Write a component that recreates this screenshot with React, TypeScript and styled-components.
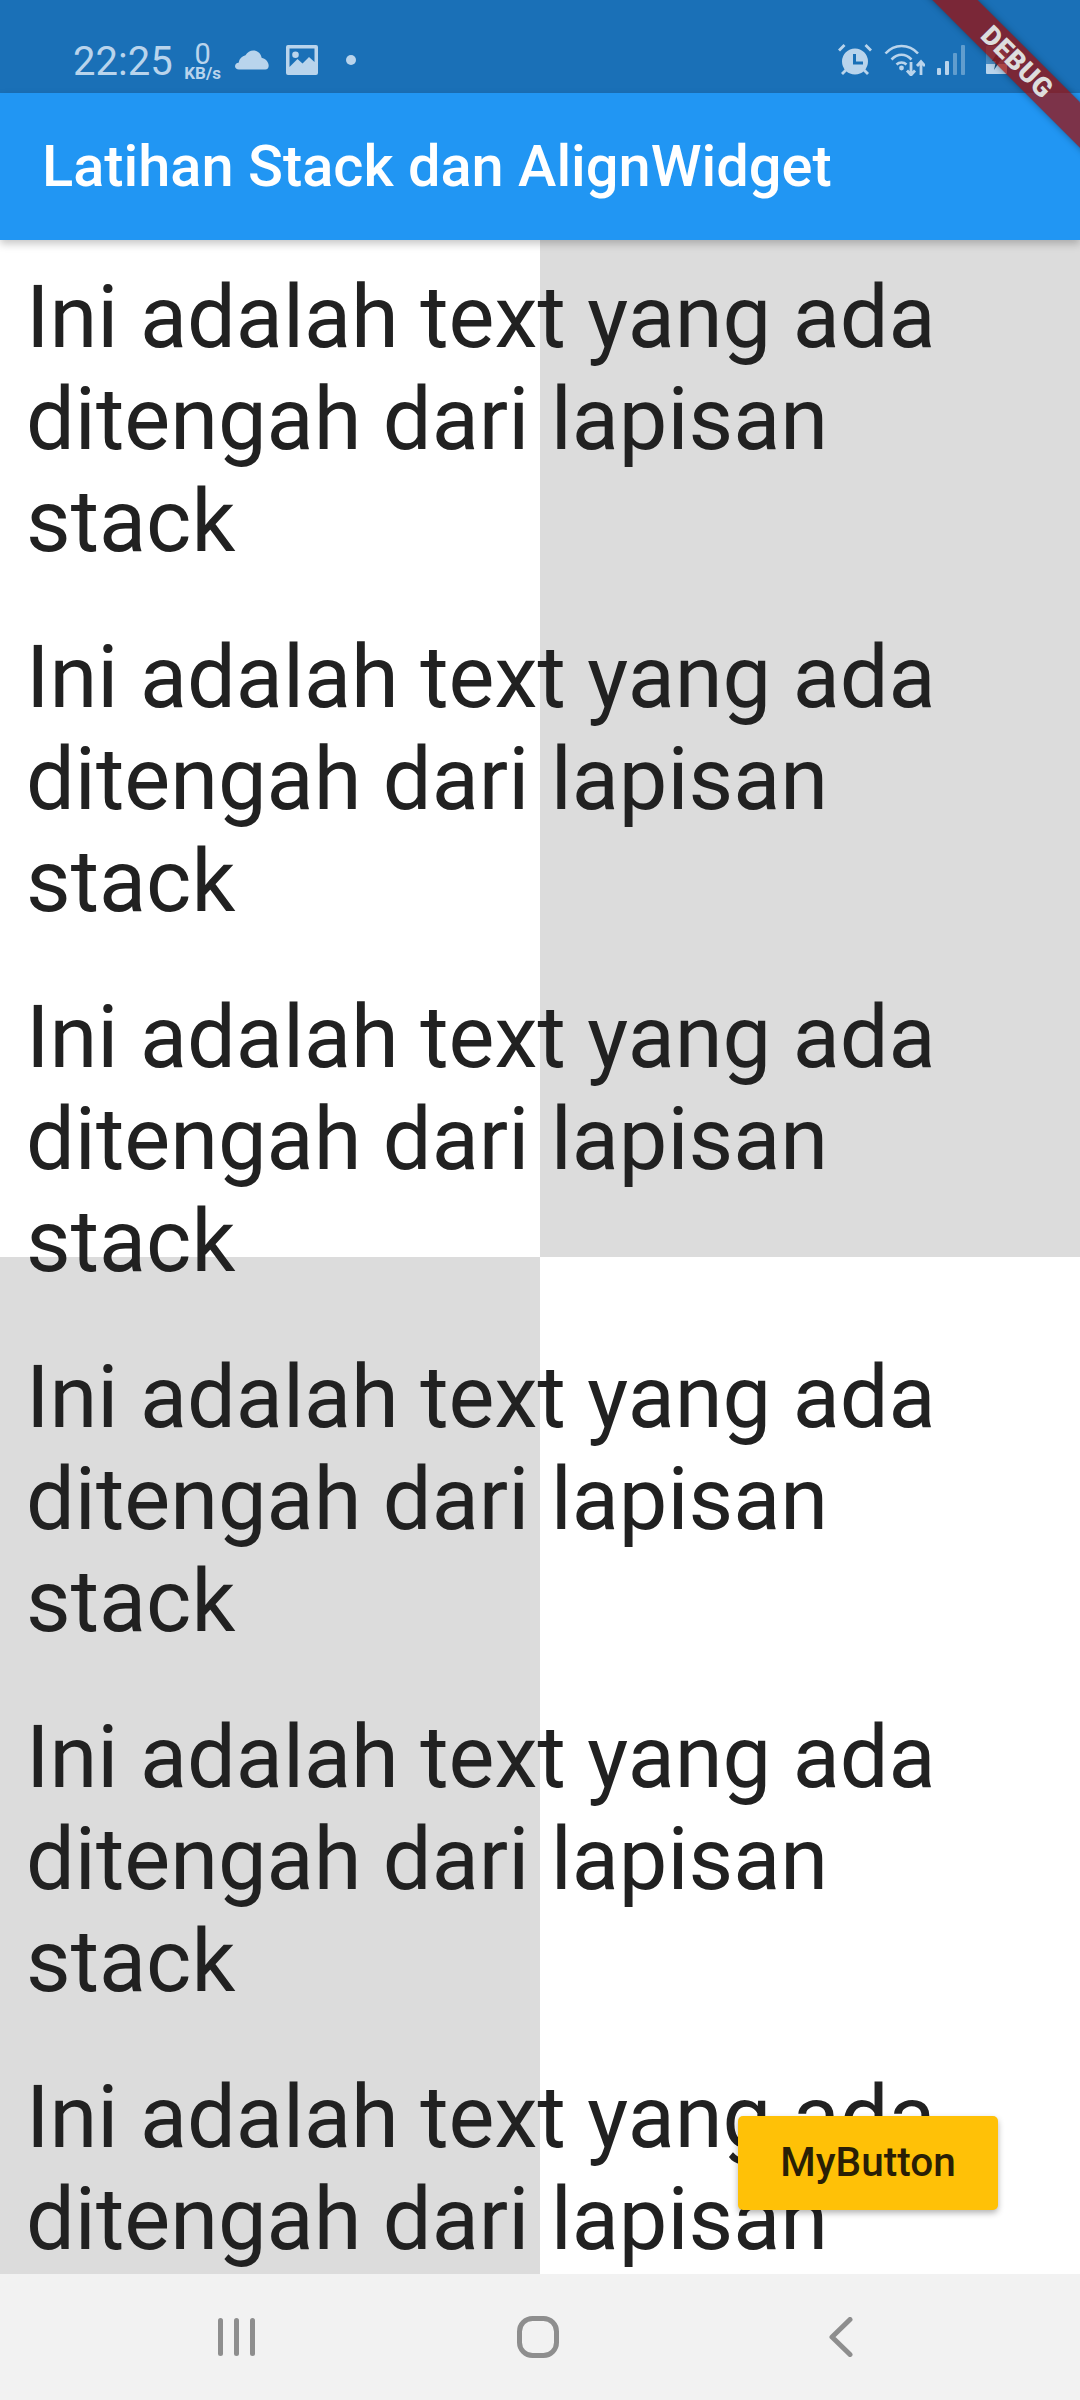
import * as React from "react";
import styled, { createGlobalStyle } from "styled-components";

const GlobalStyle = createGlobalStyle`
  html, body {
    margin: 0;
    padding: 0;
    background: #fff;
  }
  * {
    box-sizing: border-box;
  }
`;

const Screen = styled.div`
  position: relative;
  display: flex;
  flex-direction: column;
  width: 1080px;
  height: 2400px;
  overflow: hidden;
  font-family: Roboto, "Liberation Sans", sans-serif;
`;

const StatusBar = styled.div`
  display: flex;
  align-items: center;
  flex: 0 0 93px;
  padding: 27px 73px 0 73px;
  background: #1a70b7;
  color: #b9d4ec;
`;

const Clock = styled.span`
  font-size: 40px;
  line-height: 1;
  margin-top: 3px;
`;

const Speed = styled.div`
  display: flex;
  flex-direction: column;
  align-items: center;
  width: 38px;
  margin-left: 11px;
  margin-top: 3px;
`;

const SpeedValue = styled.span`
  font-size: 29px;
  line-height: 24px;
`;

const SpeedUnit = styled.span`
  font-size: 17px;
  line-height: 15px;
  font-weight: 700;
`;

const Spacer = styled.div`
  flex: 1;
`;

const StatusIcon = styled.svg<{ $left: number }>`
  display: block;
  flex: none;
  margin-left: ${p => p.$left}px;
`;

const AppBar = styled.header`
  position: relative;
  z-index: 1;
  display: flex;
  align-items: center;
  flex: 0 0 147px;
  padding-left: 42px;
  background: #2196f3;
  box-shadow: 0 4px 8px rgba(0, 0, 0, 0.22);
`;

const Title = styled.h1`
  margin: 0 0 2px;
  color: #fff;
  font-size: 57.75px;
  font-weight: 500;
`;

const Content = styled.main`
  position: relative;
  flex: 1;
  overflow: hidden;
`;

const Backdrop = styled.div`
  display: grid;
  grid-template-columns: 1fr 1fr;
  grid-template-rows: 1017px 1017px;
  height: 100%;
`;

const Tile = styled.div<{ $shaded?: boolean }>`
  background: ${p => (p.$shaded ? "#dcdcdc" : "#fff")};
`;

const TextLayer = styled.div`
  position: absolute;
  top: 0;
  left: 0;
  right: 0;
  display: flex;
  flex-direction: column;
  gap: 54px;
  padding: 27px 26px 0 26px;
`;

const Paragraph = styled.p`
  margin: 0;
  color: #212121;
  font-size: 86.6px;
  line-height: 102px;
`;

const MyButton = styled.button`
  position: absolute;
  left: 738px;
  top: 1876px;
  width: 260px;
  height: 94px;
  padding: 0 0 2px;
  border: 0;
  border-radius: 5px;
  background: #ffc107;
  color: #2a1f05;
  font-family: inherit;
  font-size: 40.5px;
  font-weight: 500;
  box-shadow: 0 3px 6px rgba(0, 0, 0, 0.3);
`;

const NavBar = styled.nav`
  display: flex;
  align-items: center;
  flex: 0 0 126px;
  padding-left: 218px;
  background: #f2f2f2;
`;

const NavIcon = styled.svg<{ $left: number }>`
  display: block;
  flex: none;
  margin-left: ${p => p.$left}px;
`;

const BannerClip = styled.div`
  position: absolute;
  top: 0;
  right: 0;
  z-index: 2;
  width: 200px;
  height: 200px;
  overflow: hidden;
  pointer-events: none;
`;

const Banner = styled.div`
  position: absolute;
  left: -3px;
  top: 46px;
  display: flex;
  align-items: center;
  justify-content: center;
  width: 280px;
  height: 32px;
  transform: rotate(45deg);
  background: rgba(164, 9, 0, 0.7);
  box-shadow: 0 0 7px rgba(0, 0, 0, 0.35);
  color: #ddd;
  font-size: 27px;
  font-weight: 900;
  letter-spacing: 0.5px;
`;

const paragraphs = [0, 1, 2, 3, 4, 5];

export default function App() {
  return (
    <Screen>
      <GlobalStyle />
      <StatusBar>
        <Clock>22:25</Clock>
        <Speed>
          <SpeedValue>0</SpeedValue>
          <SpeedUnit>KB/s</SpeedUnit>
        </Speed>
        <StatusIcon $left={13} width="34" height="20" viewBox="0 0 34 20" fill="currentColor">
          <path d="M4 19.500C1.600 19.500 0 18 0 16.200c0-1.900 1.500-3.300 3.600-3.500C4.400 8.600 7 6 10.500 5.300 12.300 2 15.300 0.500 18.200 0.500c4.400 0 7.800 3 8.400 7.200 3.700 0.800 7.100 4 7.100 8.100 0 2.200-1.300 3.700-3.400 3.700z" />
        </StatusIcon>
        <StatusIcon $left={17} width="32" height="30" viewBox="0 0 32 30" fill="currentColor">
          <path fillRule="evenodd" d="M2 0h28a2 2 0 0 1 2 2v26a2 2 0 0 1-2 2H2a2 2 0 0 1-2-2V2a2 2 0 0 1 2-2zM3.500 3.500v18.500l8-8 5 4.500 6.500-6.500 5.500 5V3.500zM9.500 6.500a3.300 3.300 0 1 1 0 6.600 3.300 3.300 0 0 1 0-6.600z" />
        </StatusIcon>
        <StatusIcon $left={28} width="10" height="10" viewBox="0 0 10 10" fill="currentColor">
          <circle cx="5" cy="5" r="5" />
        </StatusIcon>
        <Spacer />
        <StatusIcon width="34" height="32" viewBox="0 0 34 32" $left={0} fill="currentColor">
          <path fillRule="evenodd" d="M17 4.500a13 13 0 1 1 0 26 13 13 0 0 1 0-26zM15 10v10.500h10v-3h-7V10z" />
          <path d="M0 5.500 5.500 0l2 2-5.500 5.500zM34 5.500 28.500 0l-2 2 5.500 5.500zM3 29l4-4 2 2-4 4zM31 29l-4-4-2 2 4 4z" />
        </StatusIcon>
        <StatusIcon $left={12} width="41" height="32" viewBox="0 0 41 32" fill="none" stroke="currentColor" strokeWidth="2.600">
          <path d="M1.500 9.500C6 4.500 11.500 2 17.500 2S29.500 4.500 34 9.500" />
          <path d="M7.500 15.500c3-3 6.300-4.700 10-4.700 3.700 0 7 1.700 10 4.700" />
          <path d="M12.500 20.500c1.500-1.400 3.200-2 5-2s3.500.6 5 2" />
          <circle cx="17.500" cy="24" r="2.400" fill="currentColor" stroke="none" />
          <path d="M27 18v13M23 26.500l4 4.500 4-4.500M37 31V18M33 22l4-4.500 4 4.500" strokeWidth="2.800" />
        </StatusIcon>
        <StatusIcon $left={12} width="28" height="30" viewBox="0 0 28 30" fill="currentColor">
          <rect x="0" y="23" width="4" height="7" rx="1" />
          <rect x="8" y="16" width="4" height="14" rx="1" />
          <rect x="16" y="8" width="4" height="22" rx="1" opacity="0.45" />
          <rect x="24" y="0" width="4" height="30" rx="1" opacity="0.45" />
        </StatusIcon>
        <StatusIcon $left={21} width="21" height="28" viewBox="0 0 21 28" fill="currentColor">
          <path d="M1 0h19a1 1 0 0 1 1 1v17H0V1a1 1 0 0 1 1-1z" opacity="0.3" />
          <path d="M0 18h21v9a1 1 0 0 1-1 1H1a1 1 0 0 1-1-1z" />
          <path d="M13 4 6 15h4l-2 9 8-12h-4z" fill="#17527f" />
        </StatusIcon>
      </StatusBar>
      <AppBar>
        <Title>Latihan Stack dan AlignWidget</Title>
      </AppBar>
      <Content>
        <Backdrop>
          <Tile />
          <Tile $shaded />
          <Tile $shaded />
          <Tile />
        </Backdrop>
        <TextLayer>
          {paragraphs.map(i => (
            <Paragraph key={i}>Ini adalah text yang ada ditengah dari lapisan stack</Paragraph>
          ))}
        </TextLayer>
        <MyButton>MyButton</MyButton>
      </Content>
      <NavBar>
        <NavIcon $left={0} width="38" height="40" viewBox="0 0 38 40" fill="#8e8e8e">
          <rect x="0" y="1" width="5" height="38" rx="2.500" />
          <rect x="16" y="1" width="5" height="38" rx="2.500" />
          <rect x="32" y="1" width="5" height="38" rx="2.500" />
        </NavIcon>
        <NavIcon $left={261} width="42" height="42" viewBox="0 0 42 42" fill="none" stroke="#8e8e8e" strokeWidth="5">
          <rect x="2.500" y="2.500" width="37" height="37" rx="13" />
        </NavIcon>
        <NavIcon $left={270} width="24" height="40" viewBox="0 0 24 40" fill="none" stroke="#8e8e8e" strokeWidth="5" strokeLinecap="round" strokeLinejoin="round">
          <path d="M21 2.500 3 20l18 17.500" />
        </NavIcon>
      </NavBar>
      <BannerClip>
        <Banner>DEBUG</Banner>
      </BannerClip>
    </Screen>
  );
}
